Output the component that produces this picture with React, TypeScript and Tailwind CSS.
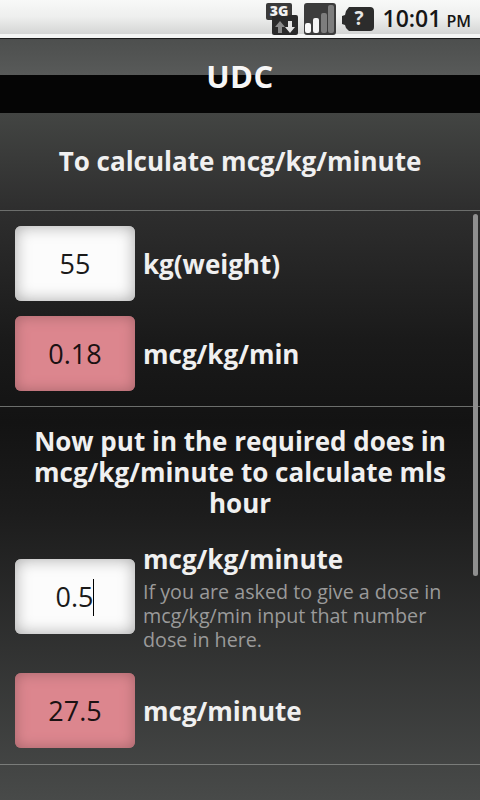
const font = { fontFamily: '"Open Sans", "Noto Sans", sans-serif' };

const Box = ({ value, pink, caret }: { value: string; pink?: boolean; caret?: boolean }) => {
  return (
    <div
      className={
        pink
          ? "w-[120px] h-[75px] shrink-0 rounded-[6px] bg-[#dc868e] shadow-[inset_0_0_14px_#a5656b] flex items-center justify-center pt-px text-[27px] text-[#1a1112]"
          : "w-[120px] h-[75px] shrink-0 rounded-[6px] bg-[#fcfcfc] shadow-[inset_0_0_16px_#a6a6a6] flex items-center justify-center pt-px text-[27px] text-[#1a1a1a]"
      }
    >
      <span>{value}</span>
      {caret && <span className="w-px h-[37px] bg-black" />}
    </div>
  );
};

const StatusBar = () => {
  return (
    <div className="h-[38px] bg-gradient-to-b from-[#f8f9f8] via-[#eeefee] to-[#d4d5d4] flex items-center justify-end pt-[3px] pl-[266px] pr-[9px] border-b-[4px] border-[#f4f5f4]">
      {/* 3G */}
      <svg width="32" height="32" viewBox="0 0 32 32" className="shrink-0 overflow-visible">
        <rect x="0" y="0" width="26" height="17" rx="2" fill="#3a3a3a" />
        <rect x="6" y="12" width="26" height="20" rx="2" fill="#2a2a2a" />
        <text x="13" y="13" textAnchor="middle" fontSize="14" fontWeight="800" fill="#f2f2f2" style={font}>3G</text>
        <path d="M14 18l-5 6h3v6h4v-6h3z" fill="#8a8a8a" />
        <path d="M24 30l-5-6h3v-6h4v6h3z" fill="#e4e4e4" />
      </svg>
      {/* signal */}
      <svg width="32" height="32" viewBox="0 0 32 32" className="ml-[6px] shrink-0">
        <rect x="0" y="0" width="32" height="32" rx="3" fill="#3c3c3c" />
        <rect x="1" y="20" width="6" height="10" rx="2" fill="#fafafa" />
        <rect x="9" y="15" width="6" height="15" rx="2" fill="#f4f4f4" />
        <rect x="17" y="10" width="6" height="20" rx="2" fill="#7d7d7d" />
        <rect x="24" y="2" width="6" height="28" rx="2" fill="#7d7d7d" />
      </svg>
      {/* no sim */}
      <svg width="32" height="24" viewBox="0 0 32 24" className="ml-[6px] shrink-0 overflow-visible">
        <path d="M7 0h21a4 4 0 0 1 4 4v16a4 4 0 0 1-4 4H7l-3-3-1-3-3-1V9l3-1 1-4z" fill="#2c2c2c" />
        <text x="17" y="18" textAnchor="middle" fontSize="19" fontWeight="700" fill="#e6e6e6" style={font}>?</text>
      </svg>
      <span className="ml-[9px] text-[23px] font-semibold text-[#161616] whitespace-nowrap leading-none">
        10:01
      </span>
      <span className="ml-[5px] text-[16px] font-semibold text-[#161616] leading-none mt-[5px]">PM</span>
    </div>
  );
};

export default function App() {
  return (
    <div className="relative w-[480px] h-[800px] overflow-hidden" style={font}>
      <StatusBar />
      <div className="relative h-[75px] border-t border-[#1c1c1c] flex flex-col">
        <div className="h-[36px] bg-gradient-to-b from-[#4d4f4e] to-[#585a59]" />
        <div className="flex-1 bg-[#050505]" />
        <div className="absolute inset-0 flex items-center justify-center text-[31px] font-bold text-[#f6f6f6] tracking-[0.5px]">
          UDC
        </div>
      </div>
      <div className="h-[687px] bg-[linear-gradient(to_bottom,#434543_0%,#2e2e2e_14%,#1a1a1a_33%,#131313_45%,#1c1c1c_58%,#484a49_100%)]">
        <div className="h-[97px] flex items-center justify-center text-[26px] font-bold text-[#f0f0f0]">
          To calculate mcg/kg/minute
        </div>
        <div className="h-px bg-[#6c6e6c]" />
        <div className="flex flex-col gap-[15px] pt-[15px] pb-[15px] pl-[15px]">
          <div className="flex items-center gap-[8px]">
            <Box value="55" />
            <span className="pt-px text-[26px] font-bold text-[#f0f0f0]">kg(weight)</span>
          </div>
          <div className="flex items-center gap-[8px]">
            <Box value="0.18" pink />
            <span className="pt-px text-[26px] font-bold text-[#f0f0f0]">mcg/kg/min</span>
          </div>
        </div>
        <div className="h-px bg-[#6c6e6c]" />
        <div className="px-[20px] pt-[19px] pb-[24px] text-center text-[26px] leading-[31px] font-bold text-[#f0f0f0]">
          Now put in the required does in mcg/kg/minute to calculate mls hour
        </div>
        <div className="flex flex-col gap-[24px] pl-[15px]">
          <div className="flex items-start gap-[8px] h-[106px]">
            <div className="pt-[16px]">
              <Box value="0.5" caret />
            </div>
            <div className="flex-1 pr-[20px]">
              <div className="pt-px text-[26px] font-bold leading-[30px] text-[#f0f0f0]">mcg/kg/minute</div>
              <div className="mt-[6px] text-[19.7px] leading-[24px] text-[#9a9a9a]">
                If you are asked to give a dose in mcg/kg/min input that number dose in here.
              </div>
            </div>
          </div>
          <div className="flex items-center gap-[8px]">
            <Box value="27.5" pink />
            <span className="pt-px text-[26px] font-bold text-[#f0f0f0]">mcg/minute</span>
          </div>
        </div>
        <div className="h-px bg-[#7a7c7a] mt-[16px]" />
      </div>
      {/* scrollbar */}
      <div className="absolute left-[473px] top-[214px] w-[5px] h-[362px] rounded-full bg-[#8f8f8f]" />
    </div>
  );
}
